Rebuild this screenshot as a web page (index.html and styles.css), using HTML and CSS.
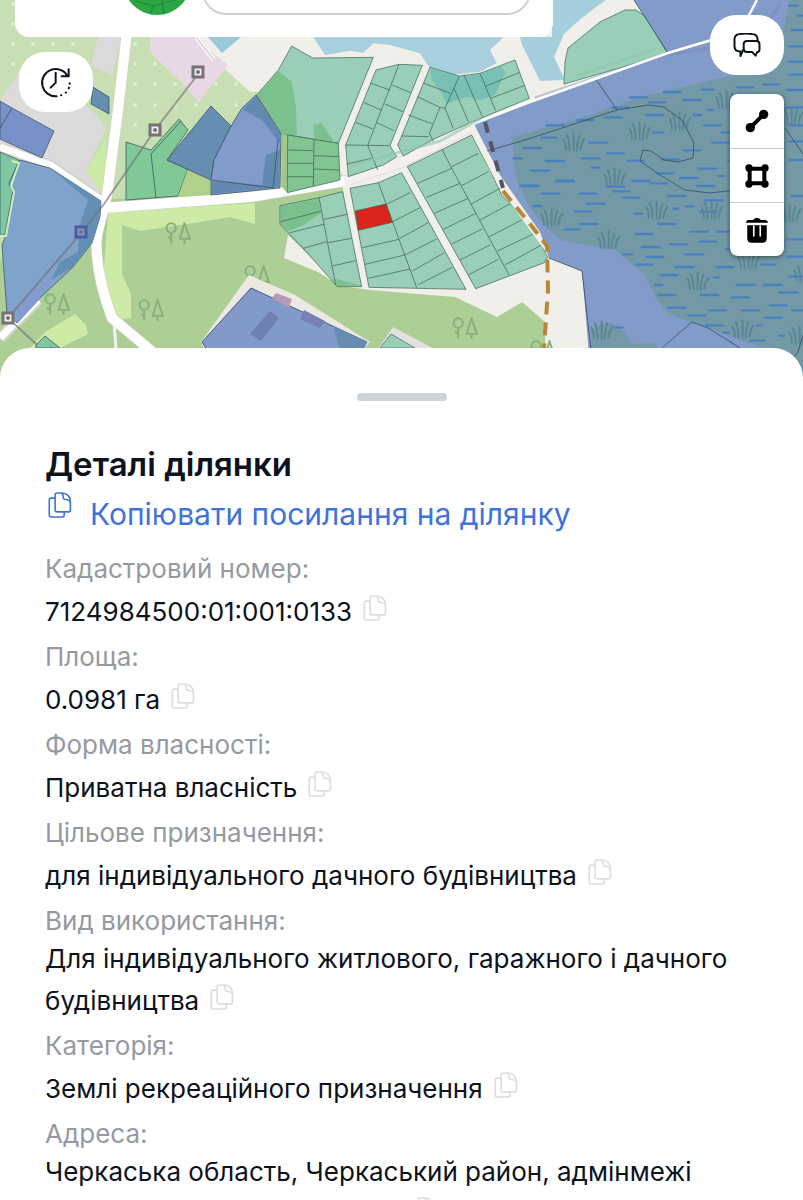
FILE: index.html
```html
<!DOCTYPE html>
<html lang="uk">
<head>
<meta charset="utf-8">
<meta name="viewport" content="width=device-width, initial-scale=1">
<title>Деталі ділянки</title>
<link rel="stylesheet" href="styles.css">
</head>
<body>
<svg class="defs" aria-hidden="true">
  <symbol id="copy" viewBox="0 0 72 80">
    <path d="M27 3h14c16 0 27 11 27 27v25a6 6 0 0 1-6 6H27a6 6 0 0 1-6-6V9a6 6 0 0 1 6-6z"/>
    <path d="M41 3c5 3 5 7 5 12v3a5 5 0 0 0 5 5h4c6 0 10 2 13 7"/>
    <path d="M21 19H9a6 6 0 0 0-6 6v46a6 6 0 0 0 6 6h34a6 6 0 0 0 6-6V61"/>
  </symbol>
  <symbol id="trees" viewBox="0 0 80 72">
    <circle cx="18" cy="18" r="14"/><path d="M18 32v32M8 44l10 8M58 4L44 50h30zM58 50v16"/>
  </symbol>
  <symbol id="grass" viewBox="0 0 64 54">
    <path d="M10 48Q10 30 3 20M20 50Q20 22 12 8M31 50V4M39 50Q40 28 46 10M49 48Q51 30 60 18"/>
  </symbol>
</svg>
<main class="app">
  <section class="map" aria-label="Карта">
    <svg class="map-canvas" viewBox="0 0 803 378" preserveAspectRatio="xMidYMin slice" aria-hidden="true">
      <rect width="803" height="378" fill="#f1efe9"/>
      <path d="M0 0H200L222 60 262 95 290 134 343 175 343 290 300 378H0z" fill="#c7dfb3"/>
      <path d="M195 37H300L262 92 250 92 215 60z" fill="#f1efe9"/>
      <g fill="#dcefcf">
        <circle cx="13" cy="4" r="2"/><circle cx="13" cy="24" r="2"/><circle cx="13" cy="44" r="2"/><circle cx="33" cy="44" r="2"/><circle cx="53" cy="44" r="2"/><circle cx="73" cy="44" r="2"/><circle cx="13" cy="64" r="2"/>
        <circle cx="135" cy="44" r="2"/><circle cx="135" cy="64" r="2"/><circle cx="155" cy="64" r="2"/><circle cx="135" cy="84" r="2"/><circle cx="155" cy="84" r="2"/><circle cx="175" cy="84" r="2"/><circle cx="216" cy="84" r="2"/><circle cx="236" cy="84" r="2"/><circle cx="135" cy="105" r="2"/><circle cx="155" cy="105" r="2"/><circle cx="175" cy="105" r="2"/><circle cx="196" cy="105" r="2"/><circle cx="236" cy="105" r="2"/><circle cx="135" cy="125" r="2"/>
      </g>
      <path d="M0 100L20 72 90 108 106 128 86 170 105 200 0 145zM98 37H122L112 75 91 66z" fill="#dddadb"/>
      <path d="M106 140L86 170 106 200z" fill="#cdeaa6"/>
      <path d="M150 37H192L228 65 198 103 187 88 150 52z" fill="#e8d7e4"/>
      <path d="M196 37L214 60" stroke="#f7f2f5" stroke-width="5"/><path d="M196 37L214 60" stroke="#c9bfc6" stroke-width="1"/>
      <path d="M208 37H241L222 53z" fill="#98c9d6"/>
      <!-- forest -->
      <path d="M0 260L95 200 285 190 345 180 335 285 370 290 455 297 497 317 522 302 545 322V378H0z" fill="#adcf96"/>
      <path d="M288 235L340 286 318 272 284 258z" fill="#f1efe9"/>
      <path d="M108 212L255 203V224L230 217 200 222 140 231 122 225V274L131 294V318L116 320 103 280zM75 314L86 325 88 334 60 348H30L45 332z" fill="#cdeaa6"/>
      <g class="trees">
        <use href="#trees" x="165" y="222" width="27" height="24"/><use href="#trees" x="138" y="299" width="27" height="24"/><use href="#trees" x="44" y="293" width="27" height="24"/><use href="#trees" x="244" y="265" width="27" height="24"/><use href="#trees" x="452" y="317" width="27" height="24"/><use href="#trees" x="530" y="340" width="27" height="24"/>
      </g>
      <!-- water -->
      <g transform="translate(250) scale(.33333)">
        <path d="M190 112L225 165 300 152 340 158 370 130 420 135 510 160 540 205 600 225 690 215 740 190 720 150 760 112z" fill="#a7cfdd"/>
      </g>
      <path d="M552 0H606Q580 18 564 34L554 57 565 80 540 81 522 45 520 37H552z" fill="#a5cfdd"/>
      <!-- roads -->
      <g fill="none" stroke-linejoin="round">
        <path d="M127 32L118 110 107 195 97 235Q94 270 112 318L155 354M103 208L250 197 345 181 400 163 470 127M0 147L50 165 104 202M0 338L38 300" stroke="#d5d3ce" stroke-width="11"/>
        <path d="M114 322L116 350" stroke="#f4f4f1" stroke-width="3"/>
        <path d="M127 32L118 110 107 195 97 235Q94 270 112 318L155 354M103 208L250 197 345 181" stroke="#fff" stroke-width="10"/>
        <path d="M0 147L50 165 104 202M0 338L38 300" stroke="#fff" stroke-width="7"/>
        <path d="M345 181L400 163 470 127" stroke="#f3f0ed" stroke-width="10"/>
        <path d="M346 184L366 288" stroke="#f1efe9" stroke-width="8"/>
      </g>
      <!-- south farmyard -->
      <path d="M201 342L249 275 295 295 370 342 360 352H205z" fill="#ece9e3"/>
      <path d="M202 342L251 288 367 342 360 352H208z" fill="#829aca" stroke="#47577a"/>
      <path d="M333 326L367 342 364 350H340z" fill="#678eb0"/>
      <path d="M270 311L279 318 261 341 250 334z" fill="#7080b3"/><path d="M304 310L325 321 320 328 300 319z" fill="#7482b4"/><path d="M272 298L276 293 292 299 289 308z" fill="#b79bb4"/>
      <path d="M376 352L393 327 440 352z" fill="#e3e1df"/><path d="M380 348L391 334 415 348z" fill="#99cfb7" stroke="#668679"/>
      <!-- north parcels -->
      <g class="parcels" transform="translate(250) scale(.33333)">
        <path d="M125 138L188 174 370 172 265 430 95 402 20 285 85 210z"/>
        <path class="dark" d="M22 285L85 213 125 245 138 320 140 408 95 400zM190 375L215 370 250 424 195 418z"/>
        <path class="olive" d="M95 402L113 405 112 578 94 560z"/>
        <path class="wood" d="M113 405L265 430 270 540 112 578z"/>
        <path d="M192 420L190 558M115 450L190 452M115 490H190M113 530H190M192 467L268 470M190 507L268 510" fill="none"/>
        <path d="M378 210L447 193 517 196 420 437 440 470 400 495 295 530 287 435z"/>
        <path d="M447 193L353 436 383 510M287 435L418 437M363 250L420 270M427 255L482 278M340 307L393 330M405 312L458 335M317 367L368 387M380 368L432 392M290 492L365 475" fill="none"/>
        <path d="M540 202L628 228 690 220 795 180 838 295 668 365 550 418 460 468 443 435 455 408z"/>
        <path class="wet" d="M542 206L628 230 690 222 755 197 765 220 735 285 690 300 650 290 590 312 575 280 545 240z"/>
        <path d="M628 228L585 325 570 322 538 400 550 425M455 408L535 410M475 345L548 372M502 290L570 322M522 250L602 280M585 325L610 385M612 265L655 365M642 225L697 350M690 220L737 332M708 258L808 218M722 295L825 256" fill="none"/>
      </g>
      <!-- south parcels -->
      <g class="parcels" transform="translate(250 170) scale(.33333)">
        <path d="M90 107L207 83 278 65 335 350H262L160 235 90 163z"/>
        <path class="dark" d="M92 109L205 86 213 130 160 165 115 183 92 162zM250 325L335 347 262 348z"/>
        <path d="M207 83L257 345M92 155L215 123M120 188L222 163M160 235L230 215M222 148L292 133M235 218L304 205M247 288L317 272" fill="none"/>
        <path d="M300 55L385 38 455 8 648 358 357 352z"/>
        <path d="M385 38L500 353M410 103L480 68M428 155L512 112M450 205L535 158M465 255L560 207M487 303L583 248M503 345L607 292M337 233L447 208M345 283L465 255M355 325L480 297" fill="none"/>
        <path d="M472-10L665-105 725 10 755 75 810 130 860 195 893 262 883 278 677 356z"/>
        <path d="M577-60L608 0 777 315M503 40L605-5M530 82L630 40M553 130L655 85M580 178L678 130M605 222L697 177M630 270L720 225M655 315L745 268M605-10L685-50M635 47L715 5M662 103L750 55M690 150L780 102M718 200L815 150M742 243L850 192M765 285L880 222" fill="none"/>
        <path d="M316 123L408 102 427 157 325 181z" fill="#da251c" stroke="#5b1712"/>
      </g>
      <path d="M564 84L565 62 568 48 600 22 625 10 636 10 645 16 668 54z" fill="#99cfb7" stroke="#5f8b79"/>
      <!-- west parcels -->
      <g stroke="#344b5c" stroke-width=".7">
        <path d="M0 101L12 108 54 131 42 158 0 139z" fill="#7792c8"/><path d="M12 108L0 128"/>
        <path d="M93 87L109 97V114L91 104z" fill="#658fb0"/>
        <path d="M126 142L151 150 179 119 188 130 167 160 188 169 178 196 126 200z" fill="#80c897"/><path d="M181 121L151 154 156 198" fill="none"/>
        <path d="M188 169L211 179V195L178 197z" fill="#b1d08b" stroke="none"/>
        <path d="M211 106L231 126 214 160 211 180 167 160z" fill="#668eb3"/>
        <path d="M231 126L242 108 256 95 281 134 280 188 211 195V180L214 160z" fill="#819bca"/>
        <path d="M256 96L281 134V145L262 120 243 110zM266 155L280 150 279 187 212 194V181L262 185z" fill="#6389b0" stroke="none"/><path d="M212 180L273 188 278 140" fill="none"/>
        <path d="M0 152L19 160 9 185 13 190 5 234 0 236z" fill="#7fc6a3"/>
        <path d="M20 160L50 168 101 201 100 217 92 243 73 267 40 298 17 323 7 313 2 245 6 235 13 190 9 183z" fill="#7fa3ca"/>
        <path d="M50 168L101 201 100 217 92 243 73 267 51 280 60 262 78 252 80 225 88 200z" fill="#658eb5" stroke="none"/>
        <path d="M48 276L17 310 18 323 40 298 38 292 50 284z" fill="#839bd0" stroke="none"/>
        <path d="M36 345L45 336 60 348H36z" fill="#80c6a0"/>
        <path d="M12 161L19 163 11 186 14 192 6 236H0" fill="none" stroke="#c9f2bd" stroke-width="2"/>
      </g>
      <path d="M202 69L155 130 104 204 82 232 8 318 37 345" fill="none" stroke="#747078" stroke-opacity=".65" stroke-width="2"/>
      <g fill="#eee" stroke="#77717a" stroke-width="3"><path d="M193 67h10v10h-10zM150 125h10v10h-10zM3 313h10v10H3z"/></g>
      <path d="M76 227h10v10H76z" fill="#8797cc" stroke="#485da4" stroke-width="3"/>
      <g fill="#77717a"><circle cx="198" cy="72" r="2"/><circle cx="155" cy="130" r="2"/><circle cx="8" cy="318" r="2"/><circle cx="81" cy="232" r="2"/></g>
      <!-- wetland -->
      <path d="M473 122L530 102 668 53 634 0H803V378H591L582 271 549 258 540 232 500 175z" fill="#839bc9"/>
      <path d="M512 137L585 117 640 97 700 83 755 70 780 45 790 0H803V378L775 353 740 340 700 325 670 315 657 300 645 275 615 250 560 240 545 226 528 205 515 175zM591 330L605 322 620 326 632 344 655 343 660 352H592z" fill="#7299a5"/>
      <g class="ripples">
        <path transform="translate(520) scale(.33333)" d="M330 292h52M432 276h50M545 269h35M386 307h50M490 300h52M275 323h50M172 360h48M255 352h50M377 345h52M520 345h23M565 330h15M80 376h52M552 376h52M398 398h30M12 444h52M65 413h44M208 428h54M605 398h30M262 460h50M490 451h52M577 428h52M185 475h54M78 483h54M322 482h50M425 478h50M-20 475h26M33 512h54M216 503h22M410 520h50M535 506h54M625 483h15M108 544h54M0 558h56M338 543h50M480 534h52M596 528h16M260 560h52M650 262h50M730 254h48M808 17h24M833 47h30M815 90h40M808 139h50M808 185h50M808 224h50M800 270h50M800 322h50M808 376h50M808 424h50M808 480h50"/>
        <path transform="translate(520 180) scale(.33333)" d="M0 17h54M65 41h52M178 41h52M110 2h50M280 34h48M392 10h50M530 18h54M310 53h48M445 48h52M555 61h54M200 71h52M40 78h24M164 94h50M345 101h22M460 86h14M497 79h24M540 94h50M180 132h52M415 132h52M133 148h45M348 162h50M510 155h54M590 155h42M365 201h54M450 193h52M538 185h50M617 208h50M310 223h28M380 231h50M495 223h54M350 254h48M467 261h54M590 261h50M725 254h40M422 285h50M582 292h14M405 315h22M650 315h54M733 315h52M415 345h52M543 345h52M635 352h52M780 338h54M445 383h52M567 391h52M665 391h54M750 376h50M505 406h52M735 413h50M815 391h40M560 436h50M710 436h16M610 458h16M777 467h16M692 482h40M285 443h22M800 178h50M800 230h50M815 48h44M808 290h50"/>
      </g>
      <g class="grasses">
        <use href="#grass" x="562" y="132" width="24" height="20"/><use href="#grass" x="628" y="121" width="24" height="20"/><use href="#grass" x="668" y="111" width="24" height="20"/><use href="#grass" x="603" y="167" width="24" height="20"/><use href="#grass" x="715" y="90" width="24" height="20"/><use href="#grass" x="540" y="207" width="24" height="20"/><use href="#grass" x="597" y="230" width="24" height="20"/><use href="#grass" x="645" y="200" width="24" height="20"/><use href="#grass" x="700" y="200" width="24" height="20"/><use href="#grass" x="686" y="271" width="24" height="20"/><use href="#grass" x="737" y="250" width="24" height="20"/><use href="#grass" x="590" y="320" width="24" height="20"/><use href="#grass" x="731" y="319" width="24" height="20"/><use href="#grass" x="788" y="325" width="24" height="20"/><use href="#grass" x="793" y="263" width="24" height="20"/><use href="#grass" x="780" y="106" width="24" height="20"/><use href="#grass" x="778" y="203" width="24" height="20"/>
      </g>
      <g fill="none" stroke="#344d66" stroke-width=".8">
        <path d="M487 151L525 140 617 110 648 105 664 107 682 120 694 143 693 158 678 162 664 160 651 151 643 150 640 161 660 175 685 190 710 193 735 190M595 78L617 110M634 0L668 53M785 128L803 154M549 258L582 271 591 350M663 347L692 322 708 328 740 348M803 335L798 352 793 358"/>
      </g>
      <path d="M535 98L660 56 710 48M762 30L780 5" stroke="#7184b8" stroke-opacity=".4" fill="none" stroke-width="3"/>
      <path d="M470 125L530 102 668 53 715 39M748 17L757 0" stroke="#fff" stroke-width="2.5" fill="none"/>
      <path d="M350 166L440 141 480 119M575 76L655 49" fill="none" stroke="#8cc7ae" stroke-opacity=".6" stroke-width="3"/>
      <path d="M471 128L500 185 547 250" fill="none" stroke="#f1efe9" stroke-width="4"/>
      <path d="M485 122L503 188" fill="none" stroke="#555463" stroke-width="4" stroke-dasharray="11 9"/>
      <path d="M503 191L527 220 547 246 548 290 544 348" fill="none" stroke="#b88636" stroke-width="4" stroke-dasharray="13 8"/>
    </svg>
    <div class="search-card">
      <span class="brand"><svg viewBox="0 0 68 68" aria-hidden="true"><path d="M12 54L30 59 28 66M30 59L56 52M38 46L41 67"/></svg></span>
      <input class="search" type="text" aria-label="Пошук">
    </div>
    <button class="pill history" type="button" aria-label="Історія">
      <svg viewBox="0 0 96 96" aria-hidden="true"><path d="M50 91A41 41 0 1 1 83 30"/><path d="M86 10V31H65M47 20V50L32 65"/><path d="M63 88l1 0M77 80l1-1M86 67l1-2M89 53v-1"/></svg>
    </button>
    <button class="pill chat" type="button" aria-label="Чат">
      <svg viewBox="0 0 84 76" aria-hidden="true"><path d="M30 52L22 70V56Q4 56 4 40V18Q5 4 20 3Q39 0 58 3Q73 4 74 18V24"/><path d="M43 24H70Q80 24 80 34V50Q80 57 73 58L68 69 58 58H42Q32 58 32 48V34Q32 24 43 24z"/></svg>
    </button>
    <div class="tools">
      <button type="button" aria-label="Лінія"><svg viewBox="0 0 72 72" aria-hidden="true"><path d="M16 56L56 16" class="bar"/><circle cx="16" cy="56" r="14"/><circle cx="56" cy="16" r="14"/></svg></button>
      <button type="button" aria-label="Полігон"><svg viewBox="0 0 72 72" aria-hidden="true"><path d="M14 14H58V58H14z" class="bar"/><circle cx="12" cy="12" r="11"/><circle cx="60" cy="12" r="11"/><circle cx="12" cy="60" r="11"/><circle cx="60" cy="60" r="11"/></svg></button>
      <button type="button" aria-label="Видалити"><svg viewBox="0 0 72 80" aria-hidden="true"><path d="M2 18Q2 10 10 9H24Q36-5 48 9H62Q70 10 70 18zM6 25H66V66Q66 79 52 79H20Q6 79 6 66z"/><path d="M26 26V60M46 26V60" class="slot"/></svg></button>
    </div>
  </section>
  <section class="sheet">
    <div class="handle"></div>
    <h1 class="title">Деталі ділянки</h1>
    <button class="copy-link" type="button"><svg class="copy-icon" aria-hidden="true"><use href="#copy"/></svg><span>Копіювати посилання на ділянку</span></button>
    <dl class="details">
      <dt>Кадастровий номер:</dt>
      <dd>7124984500:01:001:0133<button class="copy" type="button" aria-label="Копіювати"><svg class="copy-icon" aria-hidden="true"><use href="#copy"/></svg></button></dd>
      <dt>Площа:</dt>
      <dd>0.0981 га<button class="copy" type="button" aria-label="Копіювати"><svg class="copy-icon" aria-hidden="true"><use href="#copy"/></svg></button></dd>
      <dt>Форма власності:</dt>
      <dd>Приватна власність<button class="copy" type="button" aria-label="Копіювати"><svg class="copy-icon" aria-hidden="true"><use href="#copy"/></svg></button></dd>
      <dt>Цільове призначення:</dt>
      <dd>для індивідуального дачного будівництва<button class="copy" type="button" aria-label="Копіювати"><svg class="copy-icon" aria-hidden="true"><use href="#copy"/></svg></button></dd>
      <dt>Вид використання:</dt>
      <dd>Для індивідуального житлового, гаражного і дачного будівництва<button class="copy" type="button" aria-label="Копіювати"><svg class="copy-icon" aria-hidden="true"><use href="#copy"/></svg></button></dd>
      <dt>Категорія:</dt>
      <dd>Землі рекреаційного призначення<button class="copy" type="button" aria-label="Копіювати"><svg class="copy-icon" aria-hidden="true"><use href="#copy"/></svg></button></dd>
      <dt>Адреса:</dt>
      <dd>Черкаська область, Черкаський район, адмінмежі<br><button class="copy trailing" type="button" aria-label="Копіювати"><svg class="copy-icon" aria-hidden="true"><use href="#copy"/></svg></button></dd>
    </dl>
  </section>
</main>
</body>
</html>
```
FILE: styles.css
```css
* { box-sizing: border-box; }
body {
  margin: 0;
  background: #fff;
  color: #0d1220;
  font-family: Inter, "Liberation Sans", sans-serif;
}
button {
  padding: 0;
  border: 0;
  background: none;
  color: inherit;
  font: inherit;
  cursor: pointer;
}
.defs { position: absolute; width: 0; height: 0; }
.app { height: 100vh; overflow: hidden; }

.map { position: relative; height: 378px; overflow: hidden; }
.map-canvas { display: block; width: 100%; height: 100%; }
.parcels path { stroke: #335c4c; stroke-width: 2; fill: #99cfb7; }
.parcels path[fill="none"] { fill: none; }
.parcels path[fill="#da251c"] { fill: #da251c; }
.parcels .dark { fill: #7cc08d; stroke: none; }
.parcels .wood { fill: #82c592; }
.parcels .olive { fill: #a4c68a; stroke: none; }
.parcels .wet { fill: #78c0b6; stroke: none; }
.trees { fill: none; stroke: #8baf7b; stroke-width: 6; }
.ripples { fill: none; stroke: #4a80c2; stroke-width: 7; stroke-linecap: round; }
.grasses { fill: none; stroke: #5a8594; stroke-width: 5; stroke-linecap: round; }

.search-card {
  position: absolute;
  top: -60px;
  left: 15px;
  display: flex;
  gap: 11px;
  width: 67%;
  height: 97px;
  padding: 7px 22px 22px 108px;
  border-radius: 14px;
  background: #fff;
}
.brand {
  flex: none;
  width: 68px;
  height: 68px;
  border-radius: 50%;
  background: #2aa744;
}
.brand svg { display: block; fill: none; stroke: #23803a; stroke-width: 1; }
.search {
  flex: 1;
  min-width: 0;
  border: 2px solid #cfd0d3;
  border-radius: 24px;
  background: #fff;
}

.pill {
  position: absolute;
  display: grid;
  place-items: center;
  width: 74px;
  height: 60px;
  border-radius: 26px;
  background: #fff;
}
.pill svg { fill: none; stroke: #0d1220; stroke-linecap: round; stroke-linejoin: round; }
.history { top: 52px; left: 19px; }
.history svg { width: 32px; height: 32px; stroke-width: 6; }
.chat { top: 15px; right: 19px; }
.chat svg { width: 28px; height: 25px; stroke-width: 6; }

.tools {
  position: absolute;
  top: 94px;
  right: 19px;
  display: grid;
  width: 54px;
  overflow: hidden;
  border-radius: 8px;
  background: #fff;
  box-shadow: 0 1px 5px rgba(0, 0, 0, .5);
}
.tools button { display: grid; place-items: center; height: 54px; }
.tools button + button { border-top: 1px solid #ccc; }
.tools svg { width: 24px; height: 26px; }
.tools .bar { fill: none; stroke: #000; stroke-width: 12; }
.tools .slot { fill: none; stroke: #fff; stroke-width: 5; }

.sheet {
  position: relative;
  margin-top: -30px;
  padding: 45px;
  border-radius: 30px 30px 0 0;
  background: #fff;
}
.handle {
  width: 90px;
  height: 8px;
  margin: 0 auto 41px;
  border-radius: 4px;
  background: #cfd2d6;
}
.title { margin: 0; font-size: 33px; font-weight: 600; line-height: 44px; }
.copy-icon {
  display: block;
  flex: none;
  width: 24px;
  height: 26px;
  fill: none;
  stroke: currentColor;
  stroke-width: 5;
}
.copy-link {
  display: flex;
  gap: 18px;
  padding: 0 3px;
  color: #4073d8;
  font-size: 30px;
  line-height: 56px;
}
.copy-link .copy-icon { margin-top: 6px; }
.details { margin: 8px 0 0; font-size: 26px; }
.details dt { color: #9699a1; line-height: 38px; }
.details dd { margin: 0; line-height: 37px; }
.copy {
  display: inline-block;
  height: 50px;
  padding: 7px 0 17px;
  margin-left: 11px;
  color: #dcdddf;
  vertical-align: baseline;
}
.copy.trailing { margin-left: 366px; }
```
